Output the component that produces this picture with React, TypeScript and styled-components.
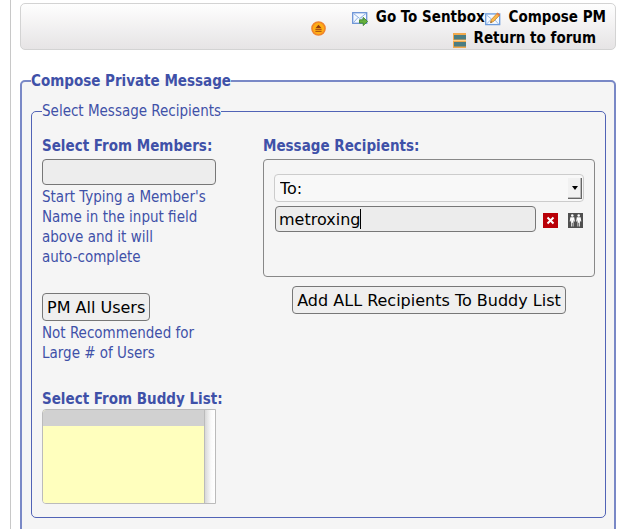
import React from "react";
import styled, { createGlobalStyle } from "styled-components";

const uiFont = `"DejaVu Sans Condensed", "DejaVu Sans", Tahoma, sans-serif`;
const controlFont = `"DejaVu Sans", Verdana, sans-serif`;
const blue = "#3f51a8";

const GlobalStyle = createGlobalStyle`
  *, *::before, *::after { box-sizing: border-box; }
  html { scrollbar-width: none; background: #fff; }
  body { margin: 0; font: 15px/20px ${uiFont}; color: ${blue}; }
`;

const Page = styled.div`
  margin-left: 10px;
  padding: 3px 4px 12px 9px;
  border-left: 1px solid #c8c8c8;
`;

const Toolbar = styled.nav`
  display: flex;
  justify-content: flex-end;
  align-items: center;
  gap: 26px;
  padding: 3px 8px 0;
  border: 1px solid #d3d3d3;
  border-radius: 5px;
  background: linear-gradient(#fefefe, #e6e4e5);
`;

const IconButton = styled.button`
  display: flex;
  padding: 0;
  border: 0;
  background: none;
`;

const Links = styled.div`
  display: flex;
  flex-direction: column;
  align-items: flex-end;
`;

const LinkRow = styled.div<{ $inset?: boolean }>`
  display: flex;
  padding-right: ${(p) => (p.$inset ? 11 : 1)}px;
`;

const ToolLink = styled.a`
  display: flex;
  align-items: center;
  gap: 8px;
  color: #000;
  font-weight: bold;
  line-height: 21px;
  text-decoration: none;
  white-space: nowrap;
  svg { margin-top: 3px; }
`;

const Panel = styled.fieldset<{ $outer?: boolean }>`
  min-width: 0;
  margin: ${(p) => (p.$outer ? "21px 0 0" : "10px 0 0")};
  padding: ${(p) => (p.$outer ? "0 8px 22px 9px" : "15px 10px 13px")};
  border: ${(p) => (p.$outer ? "2px solid #7988c6" : "1px solid #5163b6")};
  border-radius: 5px;
  background: #f5f5f5;
`;

const Legend = styled.legend<{ $strong?: boolean }>`
  padding: 0;
  font-weight: ${(p) => (p.$strong ? "bold" : "normal")};
`;

const Columns = styled.div`
  display: grid;
  grid-template-columns: 174px minmax(0, 1fr);
  gap: 47px;
`;

const Column = styled.div`
  display: flex;
  flex-direction: column;
  align-items: flex-start;
`;

const Group = styled.section`
  display: flex;
  flex-direction: column;
  align-items: flex-start;
  width: 100%;
  & + & { margin-top: 26px; }
`;

const Label = styled.label<{ $flush?: boolean }>`
  margin-bottom: ${(p) => (p.$flush ? 0 : 3)}px;
  font-weight: bold;
  white-space: nowrap;
`;

const Heading = styled.h2`
  margin: 0 0 3px;
  font-size: 15px;
  line-height: 20px;
`;

const Help = styled.p`
  margin: 2px 0 0;
`;

const NoBreak = styled.span`
  white-space: nowrap;
`;

const TextInput = styled.input`
  width: 100%;
  height: 26px;
  padding: 0 4px;
  border: 1px solid #777;
  border-radius: 4px;
  background: #ededed;
  font: 16px ${controlFont};
`;

const Button = styled.button`
  height: 28px;
  padding: 0 4px;
  border: 1px solid #777;
  border-radius: 4px;
  background: #efefef;
  color: #000;
  font: 16px ${controlFont};
  white-space: nowrap;
`;

const BuddyBox = styled.div`
  display: flex;
  width: 100%;
  height: 95px;
  border: 1px solid #bbb;
  border-radius: 4px 0 0 4px;
  overflow: hidden;
`;

const BuddySelect = styled.select`
  flex: 1;
  min-width: 0;
  padding: 0;
  border: 0;
  border-radius: 0;
  outline: 0;
  background: #ffffbe;
  scrollbar-width: none;
  option { height: 16px; min-height: 16px; padding: 0; background: #d1d1d1; }
`;

const ScrollTrack = styled.div`
  width: 11px;
  border-left: 1px solid #bbb;
  background: linear-gradient(90deg, #d8d8d8, #fafafa 60%, #fff);
`;

const RecipientBox = styled.div`
  display: flex;
  flex-direction: column;
  gap: 4px;
  width: 100%;
  margin-bottom: 9px;
  padding: 14px 10px 44px;
  border: 1px solid #888;
  border-radius: 4px;
`;

const SelectWrap = styled.div`
  position: relative;
`;

const TypeSelect = styled.select`
  appearance: none;
  display: block;
  width: 100%;
  height: 28px;
  padding: 0 24px 0 5px;
  border: 1px solid #ccc;
  border-radius: 4px;
  background: #f8f8f8;
  color: #000;
  font: 16px ${controlFont};
`;

const Arrow = styled.span`
  position: absolute;
  top: 4px;
  right: 2px;
  display: grid;
  place-items: center;
  width: 14px;
  height: 21px;
  border-right: 1px solid #666;
  border-bottom: 1px solid #666;
  box-shadow: inset -1px -1px #bbb;
  background: #f1f1f1;
  pointer-events: none;
`;

const RecipientRow = styled.div`
  display: flex;
  align-items: center;
  gap: 7px;
  padding-left: 1px;
`;

const NameField = styled.label`
  display: flex;
  align-items: center;
  flex: 1;
  min-width: 0;
  height: 26px;
  padding: 0 3px;
  border: 1px solid #777;
  border-radius: 4px;
  background: #ececec;
`;

const NameInput = styled.input`
  field-sizing: content;
  min-width: 0;
  padding: 0;
  border: 0;
  outline: 0;
  background: none;
  color: #000;
  caret-color: transparent;
  font: 16px ${controlFont};
`;

const Caret = styled.span`
  width: 1px;
  height: 20px;
  background: #000;
`;

const RowActions = styled.div`
  display: flex;
  gap: 10px;
  margin-top: 3px;
  padding-right: 1px;
`;

const Centered = styled.div`
  display: flex;
  justify-content: center;
  width: 100%;
`;

const CollapseIcon = () => (
  <svg width="15" height="15" viewBox="0 0 15 15">
    <circle cx="7.500" cy="7.500" r="6.500" fill="#ffae14" stroke="#f0852c" strokeWidth="1.700" />
    <path d="M7.500 3.800 10.600 7.200H4.400z" fill="#8f3a10" />
    <path d="M4.400 8.600h6.200M4.400 10.400h6.200" stroke="#a64d14" strokeWidth="1" />
  </svg>
);

const SentIcon = () => (
  <svg width="16" height="14" viewBox="0 0 16 14">
    <rect x=".7" y=".7" width="14" height="10.600" fill="#f4f9ff" stroke="#6b93d6" strokeWidth="1.300" />
    <path d="m1.500 1.500 6.200 5 6.200-5M1.500 10.500l4.500-5M13.500 10.500l-4-5" fill="none" stroke="#8eb0e2" />
    <path d="M7.500 7.800h3.700V5.300L15.600 9.500l-4.400 4.100v-2.500H7.500z" fill="#65b03d" stroke="#388026" strokeWidth=".8" />
  </svg>
);

const ComposeIcon = () => (
  <svg width="16" height="14" viewBox="0 0 16 14">
    <rect x=".7" y="1.900" width="14" height="10.700" fill="#f4f9ff" stroke="#6b9bdc" strokeWidth="1.300" />
    <path d="m1.500 3 5 4M1.500 12l5-5M13.500 12 10 8" stroke="#9bbbe6" />
    <path d="m5.500 10.700.8-3.200L12.500 1l2.300 2-6.400 6.600z" fill="#f9b84b" stroke="#c57e27" strokeWidth=".8" />
    <path d="m12.100 1.400 2.300 2.100" stroke="#e87949" strokeWidth="1.500" />
    <path d="m5.500 10.700.4-1.500 1.100 1.100z" fill="#444" />
  </svg>
);

const ForumIcon = () => (
  <svg width="13" height="15" viewBox="0 0 13 15">
    <rect width="13" height="15" fill="#f2a94c" />
    <path d="M1 2h12v4.500H1zM1 9h12v4.500H1z" fill="#4b7d82" />
    <path d="M0 7.500h13" stroke="#ffd08a" />
  </svg>
);

const RemoveIcon = () => (
  <svg width="15" height="15" viewBox="0 0 15 15">
    <rect width="15" height="15" fill="#b90008" />
    <path d="m4.500 4.500 6 6m0-6-6 6" stroke="#fff" strokeWidth="2" />
  </svg>
);

const BuddyIcon = () => (
  <svg width="15" height="15" viewBox="0 0 14 14">
    <rect width="14" height="14" fill="#505050" />
    <g fill="#fff">
      <circle cx="4" cy="2.300" r="1.200" />
      <circle cx="10" cy="2.300" r="1.200" />
      <path d="M2.200 4h3.600l.6 4h-.9l-.4-2v6.500h-.7V9h-.8v3.500h-.7V6l-.4 2h-.9zM8.200 4h3.600l.6 4h-.9l-.4-2v6.500h-.7V9h-.8v3.500h-.7V6l-.4 2h-.9z" />
    </g>
  </svg>
);

export default function App() {
  return (
    <>
      <GlobalStyle />
      <Page>
        <Toolbar>
          <IconButton type="button" aria-label="Collapse"><CollapseIcon /></IconButton>
          <Links>
            <LinkRow>
              <ToolLink href="#sentbox"><SentIcon />Go To Sentbox</ToolLink>
              <ToolLink href="#compose"><ComposeIcon />Compose PM</ToolLink>
            </LinkRow>
            <LinkRow $inset>
              <ToolLink href="#forum"><ForumIcon />Return to forum</ToolLink>
            </LinkRow>
          </Links>
        </Toolbar>

        <Panel $outer>
          <Legend $strong>Compose Private Message</Legend>
          <Panel>
            <Legend>Select Message Recipients</Legend>
            <Columns>
              <Column>
                <Group>
                  <Label htmlFor="member">Select From Members:</Label>
                  <TextInput id="member" type="text" />
                  <Help>
                    Start Typing a Member's Name in the input field above and it will{" "}
                    <NoBreak>auto-complete</NoBreak>
                  </Help>
                </Group>
                <Group>
                  <Button type="button">PM All Users</Button>
                  <Help>Not Recommended for Large # of Users</Help>
                </Group>
                <Group>
                  <Label $flush htmlFor="buddies">Select From Buddy List:</Label>
                  <BuddyBox>
                    <BuddySelect id="buddies" size={5}>
                      <option value="" aria-label="None" />
                    </BuddySelect>
                    <ScrollTrack />
                  </BuddyBox>
                </Group>
              </Column>
              <Column>
                <Heading>Message Recipients:</Heading>
                <RecipientBox>
                  <SelectWrap>
                    <TypeSelect aria-label="Recipient type" defaultValue="to">
                      <option value="to">To:</option>
                    </TypeSelect>
                    <Arrow>
                      <svg width="6" height="4" viewBox="0 0 6 4"><path d="M0 0h6L3 4z" /></svg>
                    </Arrow>
                  </SelectWrap>
                  <RecipientRow>
                    <NameField>
                      <NameInput type="text" aria-label="Recipient name" defaultValue="metroxing" />
                      <Caret />
                    </NameField>
                    <RowActions>
                      <IconButton type="button" aria-label="Remove recipient"><RemoveIcon /></IconButton>
                      <IconButton type="button" aria-label="Add to buddy list"><BuddyIcon /></IconButton>
                    </RowActions>
                  </RecipientRow>
                </RecipientBox>
                <Centered>
                  <Button type="button">Add ALL Recipients To Buddy List</Button>
                </Centered>
              </Column>
            </Columns>
          </Panel>
        </Panel>
      </Page>
    </>
  );
}
